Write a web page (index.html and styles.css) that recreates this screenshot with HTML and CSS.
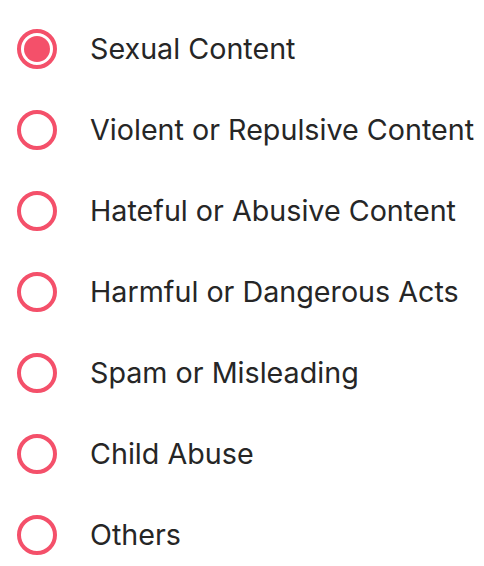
FILE: index.html
```html
<!DOCTYPE html>
<html>
<head>
<meta charset="utf-8">
<link rel="stylesheet" href="styles.css">
</head>
<body>
<ul class="options">
  <li class="option"><span class="radio selected"></span><span class="label">Sexual Content</span></li>
  <li class="option"><span class="radio"></span><span class="label">Violent or Repulsive Content</span></li>
  <li class="option"><span class="radio"></span><span class="label">Hateful or Abusive Content</span></li>
  <li class="option"><span class="radio"></span><span class="label">Harmful or Dangerous Acts</span></li>
  <li class="option"><span class="radio"></span><span class="label">Spam or Misleading</span></li>
  <li class="option"><span class="radio"></span><span class="label">Child Abuse</span></li>
  <li class="option"><span class="radio"></span><span class="label">Others</span></li>
</ul>
</body>
</html>
```
FILE: styles.css
```css
html, body {
  margin: 0;
  padding: 0;
  background: #ffffff;
}
body {
  font-family: "Inter", "Noto Sans", sans-serif;
  color: #262626;
}
.options {
  list-style: none;
  margin: 0;
  padding: 8px 0 0 17px;
  display: flex;
  flex-direction: column;
}
.option {
  height: 81px;
  display: flex;
  align-items: center;
  gap: 33px;
}
.radio {
  box-sizing: border-box;
  width: 40px;
  height: 40px;
  border: 4px solid #f4506a;
  border-radius: 50%;
  flex: none;
  display: flex;
  align-items: center;
  justify-content: center;
}
.radio.selected::after {
  content: "";
  width: 26px;
  height: 26px;
  border-radius: 50%;
  background: #f4506a;
}
.label {
  font-size: 28.7px;
  font-weight: 400;
  letter-spacing: 0;
}
```
